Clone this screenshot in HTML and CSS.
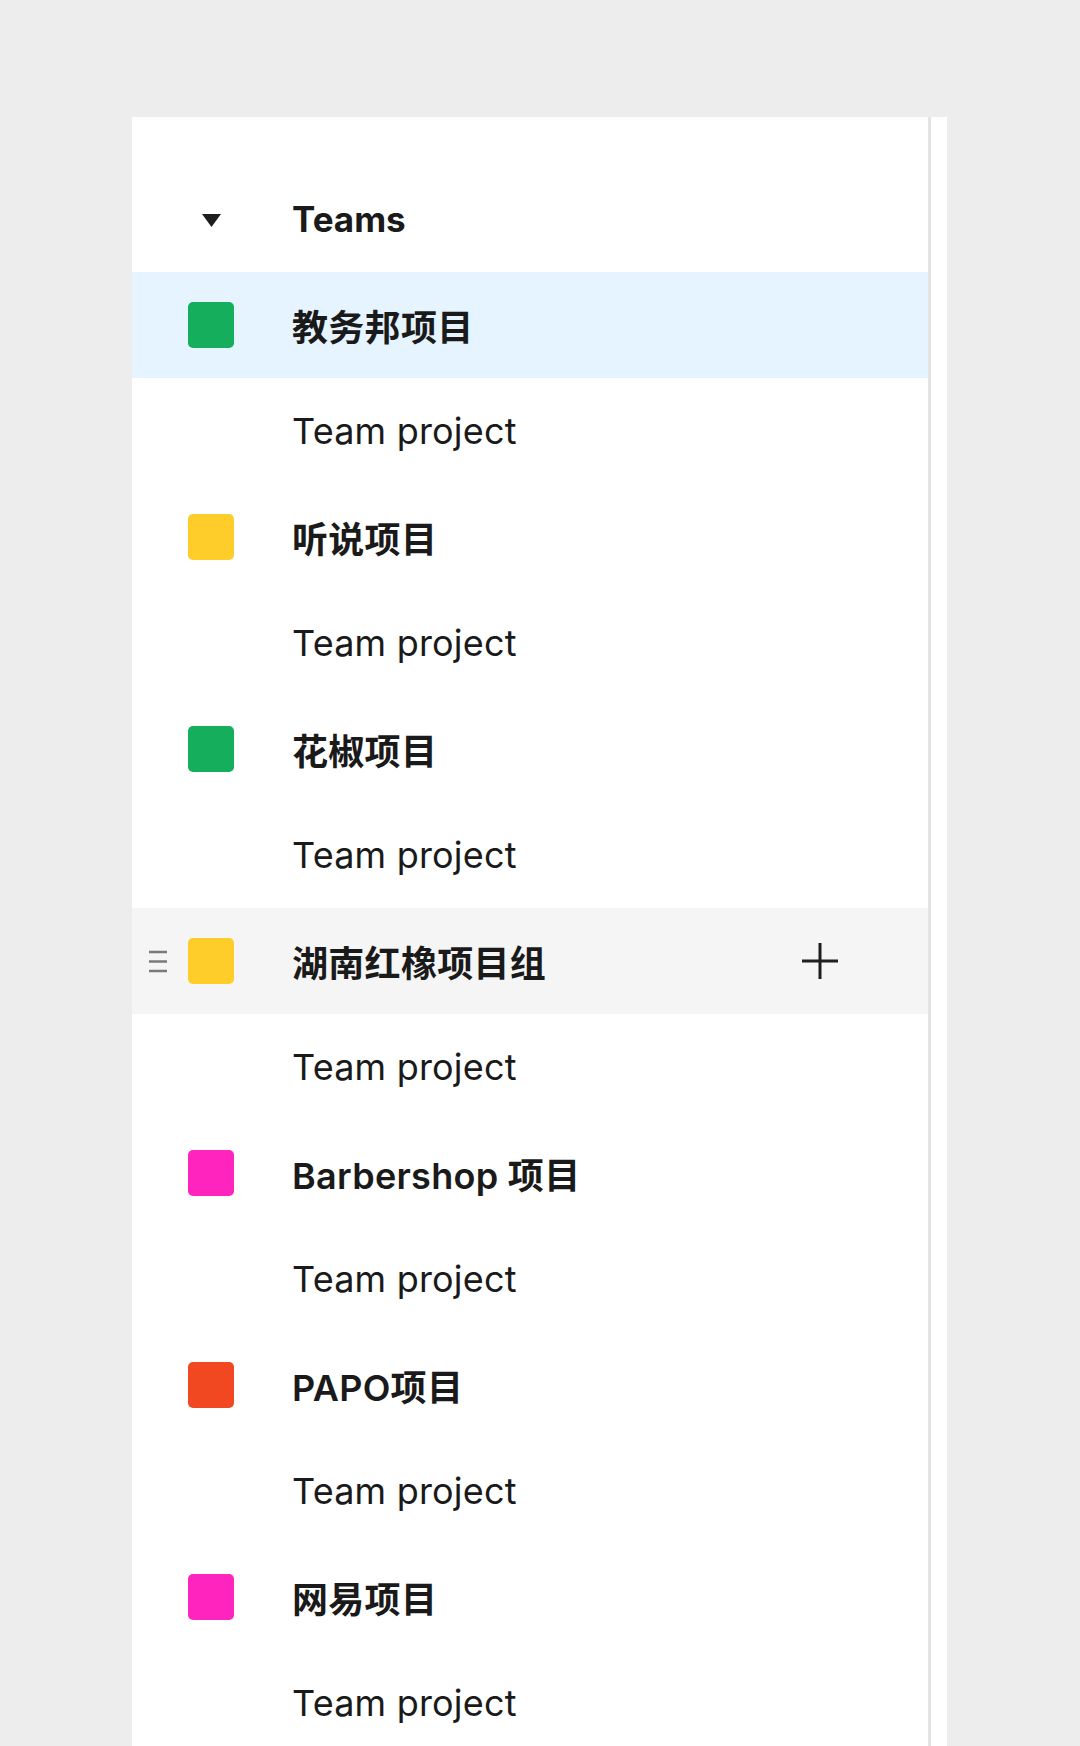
FILE: index.html
```html
<!DOCTYPE html>
<html lang="zh-CN">
<head>
  <meta charset="UTF-8">
  <meta name="viewport" content="width=device-width, initial-scale=1.0">
  <title>Teams</title>
  <link rel="stylesheet" href="styles.css">
</head>
<body>
  <div class="frame">
    <aside class="panel">
      <div class="row header">
        <span class="grip"></span>
        <span class="swatch caret">
          <svg width="19" height="13" viewBox="0 0 19 13"><path d="M0 0 H19 L9.5 13 Z" fill="#1e1e1e"/></svg>
        </span>
        <span class="label">Teams</span>
      </div>

      <div class="row team selected">
        <span class="grip"></span>
        <span class="swatch green"></span>
        <span class="label">教务邦项目</span>
      </div>
      <div class="row project">
        <span class="grip"></span>
        <span class="swatch"></span>
        <span class="label">Team project</span>
      </div>

      <div class="row team">
        <span class="grip"></span>
        <span class="swatch yellow"></span>
        <span class="label">听说项目</span>
      </div>
      <div class="row project">
        <span class="grip"></span>
        <span class="swatch"></span>
        <span class="label">Team project</span>
      </div>

      <div class="row team">
        <span class="grip"></span>
        <span class="swatch green"></span>
        <span class="label">花椒项目</span>
      </div>
      <div class="row project">
        <span class="grip"></span>
        <span class="swatch"></span>
        <span class="label">Team project</span>
      </div>

      <div class="row team hover">
        <span class="grip">
          <svg width="20" height="23" viewBox="0 0 20 23"><path d="M1 2 H19 M1 11.5 H19 M1 21 H19" stroke="#7a7a7a" stroke-width="2.4"/></svg>
        </span>
        <span class="swatch yellow"></span>
        <span class="label">湖南红橡项目组</span>
        <button class="add" aria-label="Add project">
          <svg width="36" height="36" viewBox="0 0 36 36"><path d="M18 0 V36 M0 18 H36" stroke="#1e1e1e" stroke-width="3"/></svg>
        </button>
      </div>
      <div class="row project">
        <span class="grip"></span>
        <span class="swatch"></span>
        <span class="label">Team project</span>
      </div>

      <div class="row team">
        <span class="grip"></span>
        <span class="swatch pink"></span>
        <span class="label">Barbershop 项目</span>
      </div>
      <div class="row project">
        <span class="grip"></span>
        <span class="swatch"></span>
        <span class="label">Team project</span>
      </div>

      <div class="row team">
        <span class="grip"></span>
        <span class="swatch red"></span>
        <span class="label">PAPO项目</span>
      </div>
      <div class="row project">
        <span class="grip"></span>
        <span class="swatch"></span>
        <span class="label">Team project</span>
      </div>

      <div class="row team">
        <span class="grip"></span>
        <span class="swatch pink"></span>
        <span class="label">网易项目</span>
      </div>
      <div class="row project">
        <span class="grip"></span>
        <span class="swatch"></span>
        <span class="label">Team project</span>
      </div>
    </aside>
  </div>
</body>
</html>
```

FILE: styles.css
```css
/* General Styles */
body {
  margin: 0;
  font-family: Inter, "Noto Sans CJK SC", sans-serif;
  background-color: #ededed;
  color: #1a1a1a;
  overflow: hidden;
}

.frame {
  display: flex;
  width: 815px;
  margin: 117px 0 0 132px;
  background: white;
  min-height: 1700px;
}

.panel {
  width: 796px;
  border-right: 3px solid #e4e4e4;
  padding-top: 49px;
}

/* Rows */
.row {
  display: flex;
  align-items: center;
  height: 106px;
  padding-left: 16px;
  font-size: 36px;
}

.row.selected {
  background-color: #e5f4ff;
}

.row.hover {
  background-color: #f5f5f5;
}

.grip {
  display: flex;
  align-items: center;
  width: 20px;
  margin-right: 20px;
}

.swatch {
  display: flex;
  align-items: center;
  justify-content: center;
  width: 46px;
  height: 46px;
  margin-right: 58px;
  border-radius: 5px;
}

.swatch.caret {
  margin-top: 2px;
}

.green { background-color: #14ae5c; }
.yellow { background-color: #ffcd29; }
.pink { background-color: #ff24bd; }
.red { background-color: #f24822; }

.label {
  flex: 1;
  white-space: nowrap;
}

.header .label {
  font-weight: 700;
  font-size: 35px;
}

.team .label {
  font-weight: 600;
  letter-spacing: 0.3px;
}

.project .label {
  font-weight: 400;
  letter-spacing: 0.2px;
}

.add {
  display: flex;
  background: none;
  border: none;
  padding: 0;
  margin-right: 90px;
  cursor: pointer;
}
```
